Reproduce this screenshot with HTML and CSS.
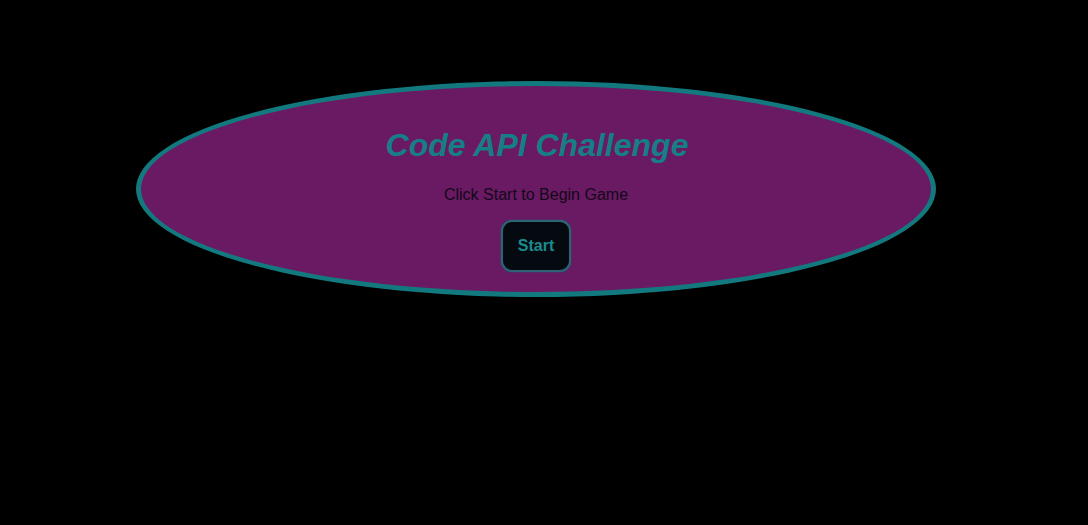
FILE: index.html
```html
<!DOCTYPE html>
<html>
<head>
<meta charset="utf-8">
<link rel="stylesheet" href="styles.css">
</head>
<body>
<main class="stage">
  <section class="oval">
    <h1 class="title">Code API Challenge</h1>
    <p class="subtitle">Click Start to Begin Game</p>
    <button class="start">Start</button>
  </section>
</main>
</body>
</html>
```

FILE: styles.css
```css
html, body {
  margin: 0;
  padding: 0;
  background: #000;
  height: 100%;
}
body {
  font-family: "Liberation Sans", Arial, sans-serif;
}
.stage {
  padding-top: 81px;
  padding-left: 136px;
}
.oval {
  box-sizing: border-box;
  width: 800px;
  height: 216px;
  border: 5px solid #127a7f;
  border-radius: 50%;
  background: #6a1a62;
  display: flex;
  flex-direction: column;
  align-items: center;
  padding-top: 41px;
}
.title {
  margin: 0 0 0 2px;
  font-size: 32px;
  font-style: italic;
  font-weight: bold;
  color: #167f86;
  line-height: 37px;
}
.subtitle {
  margin: 22px 0 0;
  font-size: 16px;
  color: #12081a;
  line-height: 18px;
}
.start {
  margin-top: 16px;
  width: 70px;
  height: 52px;
  background: #050a10;
  color: #1c8a8e;
  font-family: "Liberation Sans", Arial, sans-serif;
  font-size: 16px;
  font-weight: bold;
  border: 2px solid #2d6478;
  border-radius: 11px;
  padding: 0;
  box-shadow: 0 0 2px #1c5d6a;
}
```
